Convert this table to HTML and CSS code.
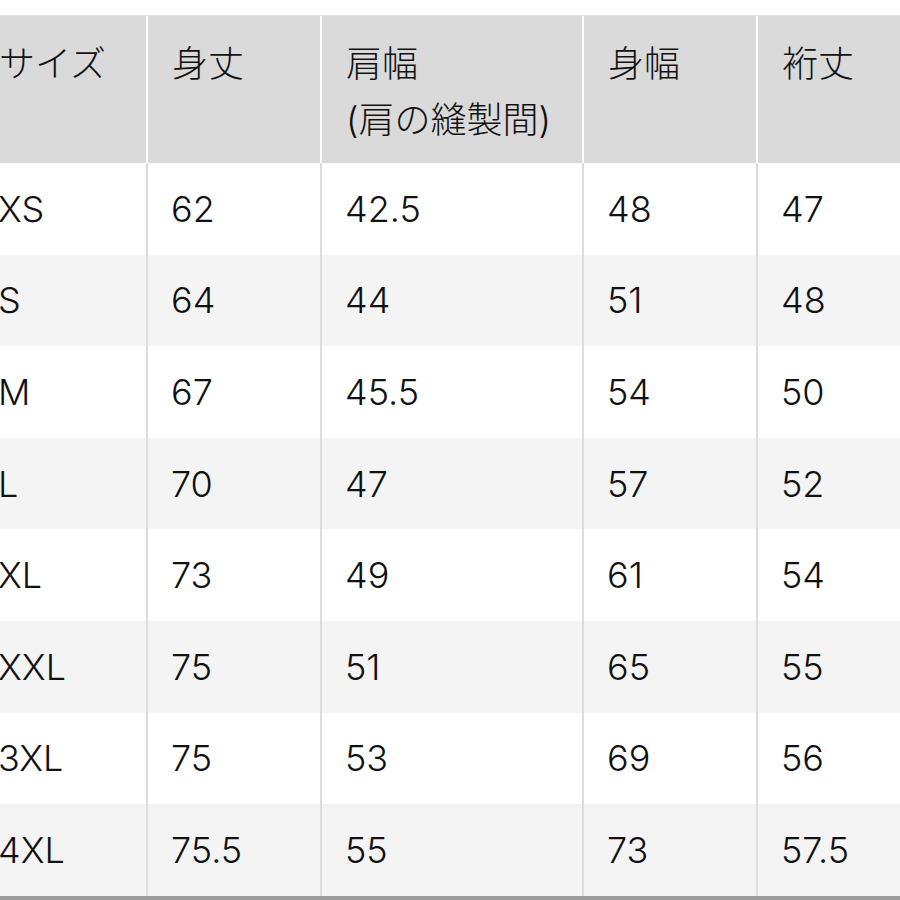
FILE: index.html
```html
<!DOCTYPE html>
<html lang="ja">
<head>
<meta charset="utf-8">
<link rel="stylesheet" href="styles.css">
</head>
<body>
<div class="page">
  <div class="table">
    <div class="row head">
      <div class="cell">サイズ</div>
      <div class="cell">身丈</div>
      <div class="cell">肩幅<br>(肩の縫製間)</div>
      <div class="cell">身幅</div>
      <div class="cell">裄丈</div>
    </div>
    <div class="row"><div class="cell">XS</div><div class="cell">62</div><div class="cell">42.5</div><div class="cell">48</div><div class="cell">47</div></div>
    <div class="row alt"><div class="cell">S</div><div class="cell">64</div><div class="cell">44</div><div class="cell">51</div><div class="cell">48</div></div>
    <div class="row"><div class="cell">M</div><div class="cell">67</div><div class="cell">45.5</div><div class="cell">54</div><div class="cell">50</div></div>
    <div class="row alt"><div class="cell">L</div><div class="cell">70</div><div class="cell">47</div><div class="cell">57</div><div class="cell">52</div></div>
    <div class="row"><div class="cell">XL</div><div class="cell">73</div><div class="cell">49</div><div class="cell">61</div><div class="cell">54</div></div>
    <div class="row alt"><div class="cell">XXL</div><div class="cell">75</div><div class="cell">51</div><div class="cell">65</div><div class="cell">55</div></div>
    <div class="row"><div class="cell">3XL</div><div class="cell">75</div><div class="cell">53</div><div class="cell">69</div><div class="cell">56</div></div>
    <div class="row alt"><div class="cell">4XL</div><div class="cell">75.5</div><div class="cell">55</div><div class="cell">73</div><div class="cell">57.5</div></div>
  </div>
</div>
</body>
</html>
```
FILE: styles.css
```css
html, body {
  margin: 0;
  padding: 0;
  background: #ffffff;
  overflow: hidden;
}
.page {
  width: 900px;
  height: 900px;
  padding-top: 15px;
  box-sizing: border-box;
  overflow: hidden;
  font-family: "Inter", "Noto Sans CJK JP", sans-serif;
  font-weight: 300;
  color: #111111;
  font-size: 36px;
}
.table {
  margin-left: -29px;
  width: 929px;
  border-top: 1px solid #e4e4e4;
  border-bottom: 4px solid #9c9c9c;
}
.row {
  display: grid;
  grid-template-columns: 177px 174px 262px 174px 1fr;
  height: 91.6px;
  background: #ffffff;
}
.row.alt {
  background: #f4f4f4;
}
.row.head {
  height: 147px;
  background: #dadada;
}
.cell {
  padding-left: 23px;
  border-right: 2px solid #dcdcdc;
  display: flex;
  align-items: center;
  box-sizing: border-box;
  white-space: nowrap;
}
.cell:first-child {
  padding-left: 27px;
}
.cell:last-child {
  border-right: none;
}
.head .cell {
  display: block;
  padding-left: 24px;
  border-right-color: #ffffff;
  padding-top: 20px;
  line-height: 56px;
}
.head .cell:first-child {
  padding-left: 28px;
}
```
